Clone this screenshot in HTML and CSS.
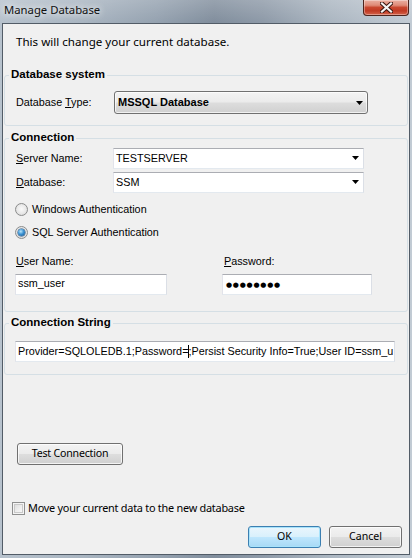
FILE: index.html
```html
<!DOCTYPE html>
<html lang="en">
<head>
<meta charset="utf-8">
<title>Manage Database</title>
<link rel="stylesheet" href="styles.css">
</head>
<body>
<div class="window">
  <div class="titlebar">
    <span class="title">Manage Database</span>
    <div class="close">
      <svg width="13" height="11" viewBox="0 0 13 11"><path d="M2 1.5L11 9.5M11 1.5L2 9.5" stroke="#3b1610" stroke-width="4.2" stroke-linecap="square"/><path d="M2 1.5L11 9.5M11 1.5L2 9.5" stroke="#f4f4f4" stroke-width="2.2" stroke-linecap="square"/></svg>
    </div>
  </div>
  <div class="client">
    <p class="intro">This will change your current database.</p>

    <div class="group g1">
      <div class="gtitle">Database system</div>
      <div class="row row-type">
        <span class="lbl lbl-type">Database <u>T</u>ype:</span>
        <div class="ddl">
          <span class="ddl-text">MSSQL Database</span>
          <svg class="arrow" width="7" height="4" viewBox="0 0 7 4"><path d="M0 0H7L3.5 4Z" fill="#000"/></svg>
        </div>
      </div>
    </div>

    <div class="group g2">
      <div class="gtitle">Connection</div>
      <div class="row row-server">
        <span class="lbl lbl-conn"><u>S</u>erver Name:</span>
        <div class="combo">
          <span class="combo-text">TESTSERVER</span>
          <svg class="arrow" width="7" height="4" viewBox="0 0 7 4"><path d="M0 0H7L3.5 4Z" fill="#000"/></svg>
        </div>
      </div>
      <div class="row row-db">
        <span class="lbl lbl-conn"><u>D</u>atabase:</span>
        <div class="combo">
          <span class="combo-text">SSM</span>
          <svg class="arrow" width="7" height="4" viewBox="0 0 7 4"><path d="M0 0H7L3.5 4Z" fill="#000"/></svg>
        </div>
      </div>
      <div class="radios">
        <div class="radio-row"><span class="radio"></span><span class="rlabel">Windows Authentication</span></div>
        <div class="radio-row"><span class="radio checked"></span><span class="rlabel">SQL Server Authentication</span></div>
      </div>
      <div class="creds">
        <div class="cred cred-user">
          <span class="clabel"><u>U</u>ser Name:</span>
          <div class="textbox"><span>ssm_user</span></div>
        </div>
        <div class="cred cred-pass">
          <span class="clabel"><u>P</u>assword:</span>
          <div class="textbox"><span class="dots">●●●●●●●●</span></div>
        </div>
      </div>
    </div>

    <div class="group g3">
      <div class="gtitle">Connection String</div>
      <div class="textbox connstr"><span>Provider=SQLOLEDB.1;Password=<span class="caret"></span>;Persist Security Info=True;User ID=ssm_u</span></div>
    </div>

    <div class="btn btn-test">Test Connection</div>

    <div class="check-row"><span class="checkbox"></span><span class="clabel2">Move your current data to the new database</span></div>

    <div class="actions">
      <div class="btn btn-ok">OK</div>
      <div class="btn btn-cancel">Cancel</div>
    </div>
  </div>
</div>
</body>
</html>
```

FILE: styles.css
```css
* { box-sizing: border-box; margin: 0; padding: 0; }
html, body { width: 412px; height: 558px; overflow: hidden; }
body {
  font-family: "Liberation Sans", Arial, sans-serif;
  font-size: 10.8px;
  color: #000;
  background: #b9c3cd;
}
u { text-decoration: underline; text-underline-offset: 1px; }

.window {
  width: 412px;
  height: 558px;
  display: flex;
  flex-direction: column;
  padding: 0 2px 3px;
  background:
    linear-gradient(180deg, rgba(255,255,255,0.18) 0, rgba(255,255,255,0) 22px),
    linear-gradient(90deg, #b7c2cd 0%, #a9b5c1 20%, #95a2b0 38%, #818e9d 52%, #8e9aa8 64%, #abb6c1 80%, #c2cbd4 100%);
}

.titlebar {
  height: 23px;
  flex: none;
  display: flex;
  justify-content: space-between;
  align-items: flex-start;
}
.title {
  font-family: "Noto Sans", "Open Sans", sans-serif;
  font-size: 11.3px;
  line-height: 16px;
  padding: 2px 0 0 2px;
  color: #111;
  text-shadow: 0 0 6px rgba(255,255,255,0.9), 0 0 10px rgba(255,255,255,0.6);
}
.close {
  width: 46px;
  height: 16px;
  margin-right: 1px;
  border: 1px solid #4d241d;
  border-top: none;
  border-radius: 0 0 4px 4px;
  background: linear-gradient(180deg, #eab0a2 0%, #df8b78 35%, #c9472f 50%, #c03a24 72%, #d4644b 100%);
  box-shadow: inset 0 0 0 1px rgba(255,255,255,0.35);
  display: flex;
  align-items: center;
  justify-content: center;
}

.client {
  height: 532px;
  flex: none;
  background: #f0f0f0;
  border: 1px solid #525c67;
  padding: 0 1px;
  display: flex;
  flex-direction: column;
}

.intro {
  font-family: "Noto Sans", "Open Sans", sans-serif;
  font-size: 11.6px;
  line-height: 16px;
  margin: 10px 0 0 12px;
  color: #000;
}

.group {
  border: 1px solid #d5dfe5;
  border-radius: 3px;
  padding: 0 0 0 11px;
}
.gtitle {
  width: fit-content;
  margin: -9px 0 0 -7px;
  padding: 0 2px;
  background: #f0f0f0;
  font-weight: bold;
  font-size: 11.5px;
  line-height: 14px;
}
.g1 { margin-top: 25px; padding-bottom: 11px; }
.g2 { margin-top: 12px; padding-bottom: 16px; }
.g3 { margin-top: 11px; padding-bottom: 12px; }

.row { display: flex; align-items: flex-start; }
.row-type { margin-top: 10px; }
.lbl { line-height: 13px; }
.lbl-type { width: 98px; margin-top: 5px; }
.lbl-conn { width: 97px; margin-top: 4px; }

.ddl {
  width: 254px;
  height: 23px;
  border: 1px solid #707070;
  border-radius: 3px;
  background: linear-gradient(180deg, #f3f3f3 0%, #ebebeb 48%, #dddddd 52%, #d0d0d0 100%);
  box-shadow: inset 0 0 0 1px rgba(255,255,255,0.7);
  display: flex;
  align-items: center;
  justify-content: space-between;
  padding: 0 4px 0 3px;
}
.ddl-text { font-weight: bold; font-size: 11px; line-height: 19px; margin-top: -1px; }

.row-server { margin-top: 4px; }
.row-db { margin-top: 3px; }
.combo {
  width: 251px;
  height: 21px;
  background: #fff;
  border: 1px solid;
  border-color: #abadb3 #dbdfe6 #e3e9ef #e2e3ea;
  display: flex;
  align-items: flex-start;
  justify-content: space-between;
  padding: 0 4px 0 2px;
}
.combo-text { line-height: 18px; }
.combo .arrow { margin-top: 7px; }

.radios { margin-top: 6px; margin-left: -1px; display: flex; flex-direction: column; gap: 2px; }
.radio-row { height: 21px; display: flex; align-items: center; gap: 4px; }
.radio {
  width: 13px;
  height: 13px;
  border-radius: 50%;
  border: 1px solid #8b8c8c;
  background: radial-gradient(circle at 50% 45%, #fafafa 0%, #e8e8e8 55%, #cfcfcf 100%);
  display: flex;
  align-items: center;
  justify-content: center;
}
.radio.checked::after {
  content: "";
  width: 7px;
  height: 7px;
  border-radius: 50%;
  background: radial-gradient(circle at 40% 35%, #b9e6fb 0%, #3d94d4 45%, #0e4b84 100%);
  box-shadow: 0 0 0 0.5px #1b4a78;
}
.rlabel { line-height: 13px; }

.creds { margin-top: 12px; margin-left: -1px; display: flex; gap: 55px; }
.cred { display: flex; flex-direction: column; gap: 6px; }
.cred-user { width: 152px; }
.cred-pass { width: 150px; }
.clabel { line-height: 13px; padding-left: 1px; }
.cred-pass .clabel { padding-left: 2px; }

.textbox {
  height: 21px;
  background: #fff;
  border: 1px solid;
  border-color: #abadb3 #dbdfe6 #e3e9ef #e2e3ea;
  padding: 0 2px;
  line-height: 17px;
  white-space: nowrap;
  overflow: hidden;
}
.dots {
  font-family: "DejaVu Sans", sans-serif;
  font-size: 7px;
  letter-spacing: 0.75px;
  padding-left: 1px;
}

.connstr { width: 380px; margin: 12px 0 0 -1px; line-height: 18px; }
.caret {
  display: inline-block;
  width: 0;
  height: 13px;
  border-left: 1px solid #000;
  vertical-align: -3px;
  margin-right: -1px;
}

.btn {
  height: 22px;
  border: 1px solid #707070;
  border-radius: 3px;
  background: linear-gradient(180deg, #f3f3f3 0%, #ebebeb 48%, #dddddd 52%, #d0d0d0 100%);
  box-shadow: inset 0 0 0 1px rgba(255,255,255,0.75);
  font-family: "Noto Sans", "Open Sans", sans-serif;
  font-size: 10.6px;
  line-height: 19px;
  text-align: center;
  color: #000;
}
.btn-test { width: 106px; margin: 68px 0 0 13px; letter-spacing: -0.2px; }

.check-row { height: 16px; margin: 35px 0 0 8px; display: flex; align-items: center; gap: 3px; }
.checkbox {
  width: 13px;
  height: 13px;
  border: 1px solid #8e8f8f;
  background: linear-gradient(135deg, #d8d8d8 0%, #f0f0f0 60%, #fbfbfb 100%);
  box-shadow: inset 0 0 0 1px #f4f4f4, inset 0 0 0 2px #c9c9c9;
}
.clabel2 {
  font-family: "Noto Sans", "Open Sans", sans-serif;
  font-size: 10.9px;
  letter-spacing: -0.25px;
  line-height: 16px;
}

.actions { margin: 10px 6px 0 0; display: flex; justify-content: flex-end; gap: 8px; }
.btn-ok, .btn-cancel { width: 73px; }
.btn-ok {
  border-color: #3c7fb1;
  background: linear-gradient(180deg, #eaf6fd 0%, #d9f0fc 48%, #bee6fd 52%, #a7d9f5 100%);
  box-shadow: inset 0 0 0 1px #a8e3fb;
}
```
